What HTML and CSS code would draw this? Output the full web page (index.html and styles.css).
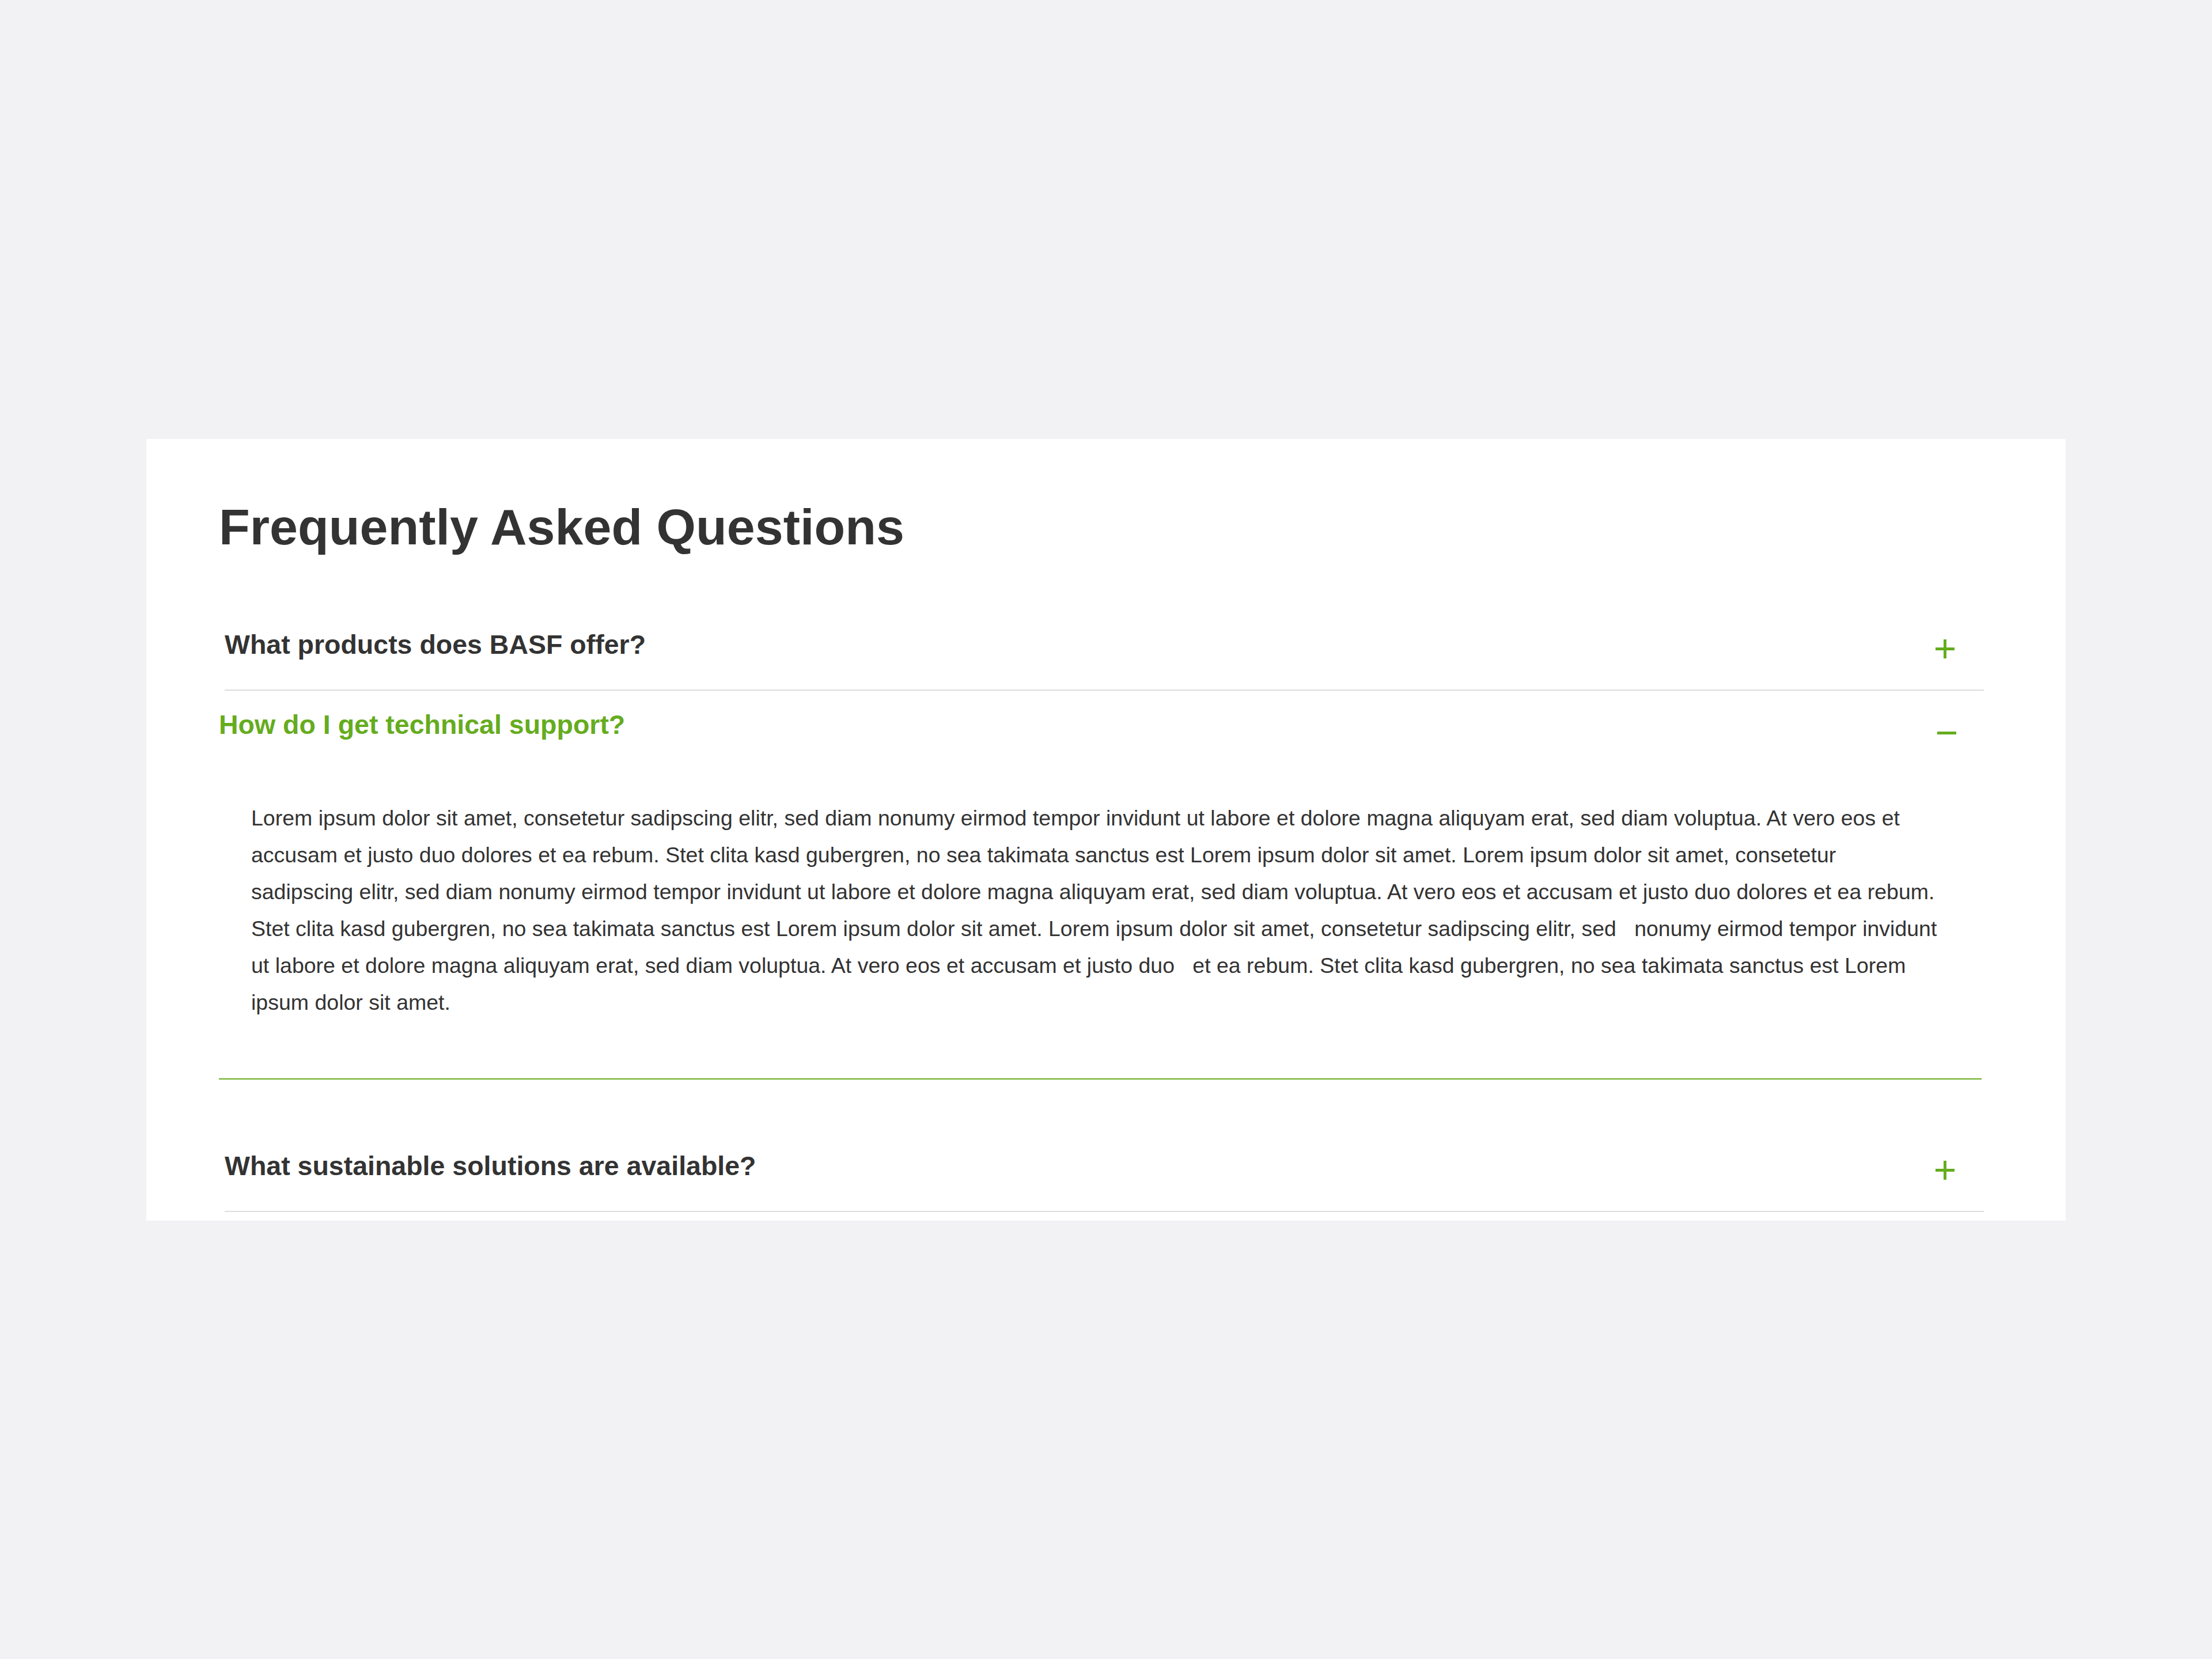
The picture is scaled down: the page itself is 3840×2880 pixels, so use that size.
FILE: index.html
```html
<!DOCTYPE html>
<html lang="en">
<head>
  <meta charset="UTF-8">
  <meta name="viewport" content="width=device-width, initial-scale=1.0">
  <title>FAQ - BASF</title>
  <link rel="stylesheet" href="styles.css">
</head>
<body>
  <section class="faq-card">
    <h2 class="faq-title">Frequently Asked Questions</h2>

    <div class="faq-list">
      <div class="faq-item">
        <div class="faq-q">
          <span>What products does BASF offer?</span>
          <svg class="faq-icon" width="33" height="33" viewBox="0 0 33 33"><rect x="0" y="14" width="33" height="5"/><rect x="14" y="0" width="5" height="33"/></svg>
        </div>
      </div>

      <div class="faq-item open">
        <div class="faq-q">
          <span>How do I get technical support?</span>
          <svg class="faq-icon minus" width="33" height="11" viewBox="0 0 33 11"><rect x="0" y="3" width="33" height="5"/></svg>
        </div>
        <div class="faq-a">
          Lorem ipsum dolor sit amet, consetetur sadipscing elitr, sed diam nonumy eirmod tempor invidunt ut labore et dolore magna aliquyam erat, sed diam voluptua. At vero eos et accusam et justo duo dolores et ea rebum. Stet clita kasd gubergren, no sea takimata sanctus est Lorem ipsum dolor sit amet. Lorem ipsum dolor sit amet, consetetur sadipscing elitr, sed diam nonumy eirmod tempor invidunt ut labore et dolore magna aliquyam erat, sed diam voluptua. At vero eos et accusam et justo duo dolores et ea rebum. Stet clita kasd gubergren, no sea takimata sanctus est Lorem ipsum dolor sit amet. Lorem ipsum dolor sit amet, consetetur sadipscing elitr, sed &nbsp; nonumy eirmod tempor invidunt ut labore et dolore magna aliquyam erat, sed diam voluptua. At vero eos et accusam et justo duo &nbsp; et ea rebum. Stet clita kasd gubergren, no sea takimata sanctus est Lorem ipsum dolor sit amet.
        </div>
      </div>

      <div class="faq-item">
        <div class="faq-q">
          <span>What sustainable solutions are available?</span>
          <svg class="faq-icon" width="33" height="33" viewBox="0 0 33 33"><rect x="0" y="14" width="33" height="5"/><rect x="14" y="0" width="5" height="33"/></svg>
        </div>
      </div>
    </div>
  </section>
</body>
</html>
```

FILE: styles.css
```css
body {
  margin: 0;
  min-height: 100vh;
  display: flex;
  align-items: center;
  justify-content: center;
  background: #f2f2f4;
  font-family: "Liberation Sans", Arial, sans-serif;
  color: #333;
}
.faq-card {
  width: 3332px;
  box-sizing: border-box;
  padding: 103px 146px 15px 126px;
  background: #fff;
}
.faq-title {
  margin: 0 0 95px;
  font-size: 88px;
  line-height: 100px;
  font-weight: bold;
}
.faq-item {
  margin: 0 -4px 0 10px;
  border-bottom: 2px solid #dcdcdc;
}
.faq-item.open {
  margin: 0 0 91px;
  border-bottom-color: #65ac1e;
}
.faq-q {
  display: flex;
  justify-content: space-between;
  align-items: flex-start;
  padding: 31px 0 50px;
  font-size: 46.5px;
  line-height: 56px;
  font-weight: bold;
}
.faq-item.open .faq-q {
  color: #65ac1e;
}
.faq-icon {
  fill: #65ac1e;
  margin: 19px 51px 0 0;
}
.faq-icon.minus {
  margin: 37px 44px 0 0;
}
.faq-a {
  padding: 52px 72px 100px 56px;
  font-size: 37.5px;
  line-height: 64px;
}
```
